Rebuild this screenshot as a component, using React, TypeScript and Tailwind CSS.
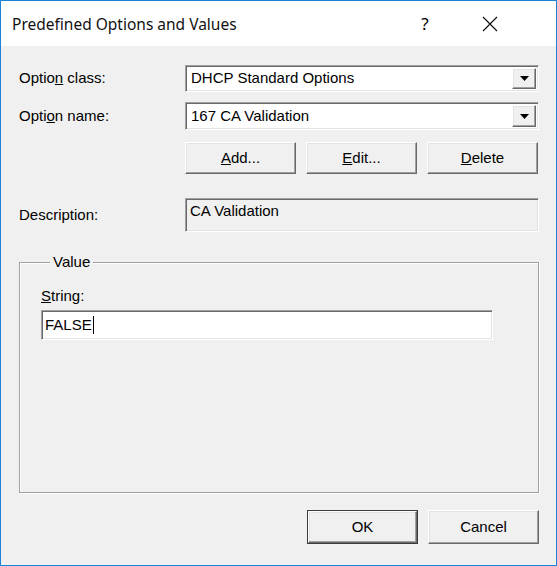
import React from "react";

const sunken =
  "border border-t-[#a0a0a0] border-l-[#a0a0a0] border-r-white border-b-white shadow-[inset_1px_1px_0_#696969,inset_-1px_-1px_0_#e3e3e3]";
const raised =
  "border border-t-white border-l-white border-r-[#696969] border-b-[#696969] shadow-[inset_-1px_-1px_0_#a0a0a0,inset_1px_1px_0_#e3e3e3]";

const Combo = ({ value }: { value: string }) => (
  <div className={`flex flex-1 h-full bg-white ${sunken} p-[2px]`}>
    <div className="flex-1 flex items-center pl-[3px] text-black">{value}</div>
    <div className={`w-[24px] h-full bg-[#f0f0f0] flex items-center justify-center ${raised}`}>
      <svg width="9" height="5" viewBox="0 0 9 5">
        <polygon points="0,0 9,0 4.5,5" fill="#000" />
      </svg>
    </div>
  </div>
);

const Button = ({ children, def }: { children: React.ReactNode; def?: boolean }) => (
  <button
    className={`w-[111px] h-full bg-[#f0f0f0] text-black ${def ? "border border-[#3c3c3c] p-0" : ""}`}
  >
    <div className={`w-full h-full flex items-center justify-center ${raised}`}>{children}</div>
  </button>
);

export default function App() {
  return (
    <div
      className="w-[557px] h-[566px] border border-[#1c84d8] bg-[#f0f0f0] flex flex-col text-[15px] text-black"
      style={{ fontFamily: '"Liberation Sans", Arial, sans-serif' }}
    >
      {/* title bar */}
      <div className="h-[45px] bg-white flex items-center pl-[11px] shrink-0">
        <span className="flex-1 text-[15.5px] text-[#111] pt-[2px]" style={{ fontFamily: '"Noto Sans", sans-serif' }}>
          Predefined Options and Values
        </span>
        <span className="w-[30px] text-center text-[17px] mr-[27px]" style={{ fontFamily: '"Noto Sans", sans-serif' }}>?</span>
        <div className="w-[46px] flex justify-center mr-[43px]">
          <svg width="16" height="16" viewBox="0 0 16 16">
            <path d="M1 1L15 15M15 1L1 15" stroke="#111" strokeWidth="1.2" />
          </svg>
        </div>
      </div>

      <div className="flex-1 flex flex-col pl-[18px] pr-[17px] pt-[19px]">
        <div className="flex h-[27px] items-center">
          <div className="w-[166px]">Optio<u>n</u> class:</div>
          <Combo value="DHCP Standard Options" />
        </div>
        <div className="flex h-[28px] items-center mt-[10px]">
          <div className="w-[166px]">Opti<u>o</u>n name:</div>
          <Combo value="167 CA Validation" />
        </div>
        <div className="flex h-[32px] mt-[12px] pl-[166px] gap-[10px]">
          <Button><span><u>A</u>dd...</span></Button>
          <Button><span><u>E</u>dit...</span></Button>
          <Button><span><u>D</u>elete</span></Button>
        </div>
        <div className="flex h-[34px] mt-[24px] items-center">
          <div className="w-[166px]">Description:</div>
          <div className={`flex-1 h-full ${sunken} pl-[4px] pt-[3px] leading-[18px]`}>CA Validation</div>
        </div>

        <fieldset className="mt-[21px] h-[240px] border border-[#a0a0a0] shadow-[inset_1px_1px_0_#fff,1px_1px_0_#fff] pl-[21px]">
          <legend className="ml-[9px] px-[3px] bg-[#f0f0f0] leading-[18px]">Value</legend>
          <div className="mt-[16px] leading-[18px]"><u>S</u>tring:</div>
          <div className={`mt-[5px] w-[452px] h-[30px] bg-white ${sunken} flex items-center pl-[3px]`}>
            FALSE<span className="inline-block w-[1px] h-[18px] bg-black ml-[1px]" />
          </div>
        </fieldset>

        <div className="flex h-[34px] mt-[17px] justify-end gap-[10px]">
          <Button def><span>OK</span></Button>
          <Button><span>Cancel</span></Button>
        </div>
      </div>
    </div>
  );
}
